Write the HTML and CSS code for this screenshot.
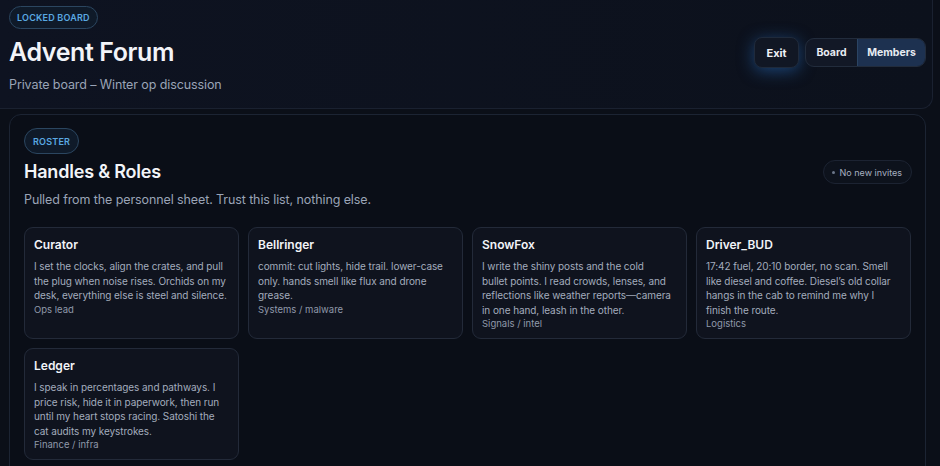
FILE: index.html
```html
<!DOCTYPE html>
<html lang="en">
<head>
<meta charset="utf-8">
<title>Advent Forum</title>
<link rel="stylesheet" href="styles.css">
</head>
<body>
<header class="top">
  <div class="top-left">
    <span class="pill">Locked board</span>
    <h1 class="title">Advent Forum</h1>
    <p class="subtitle">Private board – Winter op discussion</p>
  </div>
  <div class="top-actions">
    <button class="btn exit">Exit</button>
    <div class="seg">
      <button class="seg-btn">Board</button>
      <button class="seg-btn active">Members</button>
    </div>
  </div>
</header>
<main class="panel">
  <span class="pill">Roster</span>
  <div class="panel-head">
    <h2 class="h2">Handles &amp; Roles</h2>
    <span class="status"><span class="dot"></span>No new invites</span>
  </div>
  <p class="lead">Pulled from the personnel sheet. Trust this list, nothing else.</p>
  <div class="grid">
    <article class="card">
      <h3 class="card-title">Curator</h3>
      <p class="card-text">I set the clocks, align the crates, and pull<br>the plug when noise rises. Orchids on my<br>desk, everything else is steel and silence.</p>
      <p class="card-role">Ops lead</p>
    </article>
    <article class="card">
      <h3 class="card-title">Bellringer</h3>
      <p class="card-text">commit: cut lights, hide trail. lower-case<br>only. hands smell like flux and drone<br>grease.</p>
      <p class="card-role">Systems / malware</p>
    </article>
    <article class="card">
      <h3 class="card-title">SnowFox</h3>
      <p class="card-text">I write the shiny posts and the cold<br>bullet points. I read crowds, lenses, and<br>reflections like weather reports—camera<br>in one hand, leash in the other.</p>
      <p class="card-role">Signals / intel</p>
    </article>
    <article class="card">
      <h3 class="card-title">Driver_BUD</h3>
      <p class="card-text">17:42 fuel, 20:10 border, no scan. Smell<br>like diesel and coffee. Diesel’s old collar<br>hangs in the cab to remind me why I<br>finish the route.</p>
      <p class="card-role">Logistics</p>
    </article>
    <article class="card">
      <h3 class="card-title">Ledger</h3>
      <p class="card-text">I speak in percentages and pathways. I<br>price risk, hide it in paperwork, then run<br>until my heart stops racing. Satoshi the<br>cat audits my keystrokes.</p>
      <p class="card-role">Finance / infra</p>
    </article>
  </div>
</main>
</body>
</html>
```
FILE: styles.css
```css
* { box-sizing: border-box; }
html, body { margin: 0; padding: 0; }
body {
  background: #0b0f18;
  color: #e8ecf2;
  font-family: "Inter", "Noto Sans", sans-serif;
  width: 940px;
  height: 466px;
  overflow: hidden;
}
.top {
  width: 933px;
  height: 109px;
  background: linear-gradient(90deg, #0e1321 0%, #0c111c 100%);
  border: 1px solid #1a2130;
  border-top: none;
  border-left: none;
  border-radius: 0 0 12px 0;
  display: flex;
  justify-content: space-between;
  align-items: flex-start;
  padding: 6px 6px 0 9px;
}
.top-left { display: flex; flex-direction: column; align-items: flex-start; }
.pill {
  display: inline-flex;
  align-items: center;
  height: 23px;
  padding: 0 7px;
  border: 1px solid #2b4660;
  border-radius: 12px;
  background: #0f1a29;
  color: #5aa9e2;
  font-size: 9px;
  font-weight: 600;
  text-transform: uppercase;
  letter-spacing: 0.2px;
}
.title {
  margin: 8px 0 0;
  font-size: 25px;
  font-weight: 600;
  line-height: 30px;
  color: #f2f4f8;
  letter-spacing: -0.4px;
}
.subtitle {
  margin: 10px 0 0;
  font-size: 12.5px;
  line-height: 16px;
  color: #9aa4b6;
  letter-spacing: -0.1px;
}
.top-actions {
  display: flex;
  align-items: center;
  gap: 6px;
  margin-top: 31px;
}
.btn {
  font-family: inherit;
  height: 31px;
  width: 45px;
  padding: 0;
  border-radius: 8px;
  border: 1px solid #1f2a3b;
  background: #111724;
  color: #eef1f6;
  font-size: 11px;
  font-weight: 700;
  box-shadow: 0 3px 16px rgba(40, 110, 190, 0.55);
}
.seg {
  display: flex;
  height: 29px;
  border: 1px solid #222c3c;
  border-radius: 9px;
  overflow: hidden;
  background: #121826;
}
.seg-btn {
  font-family: inherit;
  border: none;
  background: transparent;
  color: #e8ecf2;
  font-size: 10.5px;
  font-weight: 700;
  padding: 0;
  width: 51px;
}
.seg-btn.active {
  background: #1d3150;
  border-left: 1px solid #2b4463;
  width: 68px;
}
.panel {
  margin: 5px 0 0 9px;
  width: 917px;
  height: 400px;
  border: 1px solid #1c2433;
  border-radius: 12px;
  background: #0a0e17;
  padding: 13px 15px 0 14px;
}
.panel .pill { height: 26px; padding: 0 8px; border-radius: 13px; font-size: 9px; }
.panel-head {
  display: flex;
  justify-content: space-between;
  align-items: center;
  margin-top: 5px;
  margin-right: -2px;
}
.h2 {
  margin: 0;
  font-size: 18px;
  font-weight: 600;
  line-height: 26px;
  color: #f2f4f8;
  letter-spacing: -0.2px;
}
.status {
  display: inline-flex;
  align-items: center;
  gap: 5px;
  height: 24px;
  padding: 0 9px 0 8px;
  border: 1px solid #1c2332;
  border-radius: 12px;
  background: #0d121c;
  color: #a7b0c0;
  font-size: 9px;
}
.dot { width: 3px; height: 3px; border-radius: 50%; background: #6c778a; }
.lead {
  margin: 7px 0 0;
  font-size: 12.5px;
  line-height: 16px;
  color: #9aa4b6;
  letter-spacing: -0.1px;
}
.grid {
  display: grid;
  grid-template-columns: repeat(4, 215px);
  gap: 9px;
  margin-top: 19px;
}
.card {
  border: 1px solid #232a39;
  border-radius: 9px;
  background: #0f131e;
  padding: 9px 9px 7px 9px;
}
.card-title {
  margin: 0;
  font-size: 12px;
  font-weight: 600;
  line-height: 16px;
  color: #f2f4f8;
}
.card-text {
  margin: 6px 0 0;
  font-size: 10px;
  line-height: 14.5px;
  color: #a3acbd;
  white-space: nowrap;
  letter-spacing: -0.08px;
}
.card-role {
  margin: 0;
  font-size: 9.5px;
  line-height: 14px;
  color: #8f99aa;
}
```
